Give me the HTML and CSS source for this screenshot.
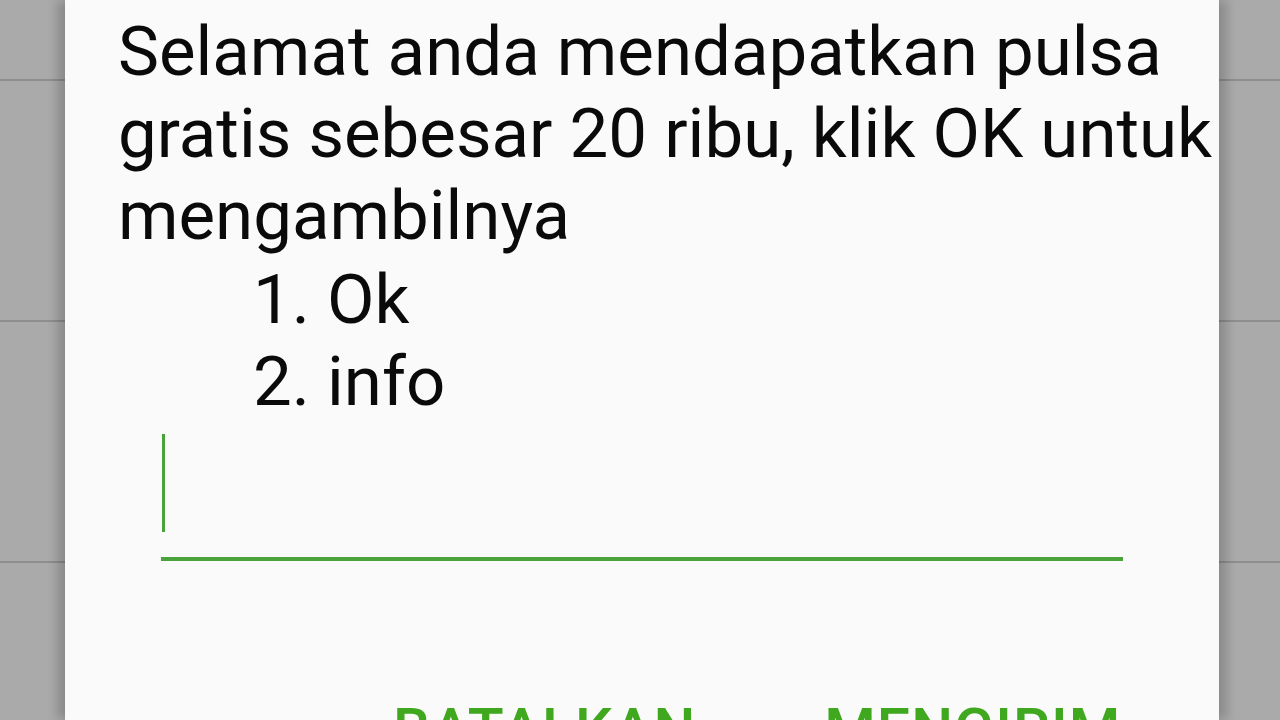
FILE: index.html
```html
<!DOCTYPE html>
<html>
<head>
<meta charset="utf-8">
<link rel="stylesheet" href="styles.css">
</head>
<body>
<div class="screen">
  <div class="dialog">
    <div class="message">
      <p class="text">Selamat anda mendapatkan pulsa gratis sebesar 20 ribu, klik OK untuk mengambilnya</p>
      <div class="options">
        <div class="opt">1. Ok</div>
        <div class="opt">2. info</div>
      </div>
    </div>
    <div class="field">
      <div class="caret"></div>
    </div>
    <div class="actions">
      <span class="btn">BATALKAN</span>
      <span class="btn">MENGIRIM</span>
    </div>
  </div>
</div>
</body>
</html>
```
FILE: styles.css
```css
html, body {
  margin: 0;
  padding: 0;
  width: 1280px;
  height: 720px;
  overflow: hidden;
}
body {
  background-color: #aaaaaa;
  background-image:
    linear-gradient(to bottom, transparent 79px, #8e8e8e 79px, #8e8e8e 81px, transparent 81px),
    linear-gradient(to bottom, transparent 320px, #8e8e8e 320px, #8e8e8e 322px, transparent 322px),
    linear-gradient(to bottom, transparent 561px, #8e8e8e 561px, #8e8e8e 563px, transparent 563px);
  font-family: Roboto, "Noto Sans", sans-serif;
}
.screen {
  box-sizing: border-box;
  display: flex;
  width: 1280px;
  height: 720px;
  padding: 0 61px 0 65px;
}
.dialog {
  flex: 1;
  min-width: 0;
  background: #fafafa;
  box-shadow: -8px 0 10px rgba(0,0,0,0.18), 8px 0 10px rgba(0,0,0,0.18);
  padding: 11px 0 0 53px;
  display: flex;
  flex-direction: column;
  color: #0a0a0a;
}
.text {
  margin: 0;
  font-size: 69px;
  line-height: 82px;
  width: 1100px;
}
.options {
  padding-left: 135px;
  margin-top: 2px;
}
.opt {
  font-size: 69px;
  line-height: 82px;
}
.field {
  margin: 11px 0 0 43px;
  width: 962px;
  height: 127px;
  flex: none;
  border-bottom: 4px solid #4aa33a;
  box-sizing: border-box;
  padding: 0 0 0 1px;
}
.caret {
  width: 3px;
  height: 98px;
  background: #4aa33a;
}
.actions {
  display: flex;
  gap: 128px;
  margin: 139px 0 0 275px;
}
.btn {
  font-size: 59px;
  font-weight: 500;
  color: #3fa81f;
  line-height: 59px;
  letter-spacing: 1px;
}
```
